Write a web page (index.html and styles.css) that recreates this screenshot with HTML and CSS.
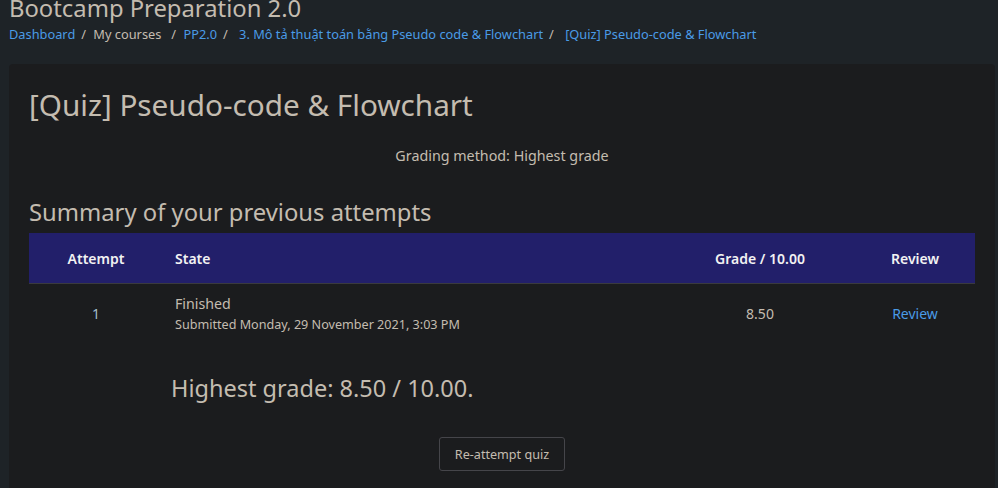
FILE: index.html
```html
<!DOCTYPE html>
<html>
<head>
<meta charset="utf-8">
<link rel="stylesheet" href="styles.css">
</head>
<body>
<header class="page-header">
  <h1 class="course-title">Bootcamp Preparation 2.0</h1>
  <nav class="breadcrumb">
    <a href="#">Dashboard</a><span class="sep">/</span>
    <span class="crumb-text">My courses</span><span class="sep">/</span>
    <a href="#">PP2.0</a><span class="sep">/</span>
    <a href="#" class="crumb-wide">3. Mô tả thuật toán bằng Pseudo code &amp; Flowchart</a><span class="sep">/</span>
    <a href="#" class="crumb-wide">[Quiz] Pseudo-code &amp; Flowchart</a>
  </nav>
</header>
<main class="card">
  <h2 class="quiz-title">[Quiz] Pseudo-code &amp; Flowchart</h2>
  <p class="grading">Grading method: Highest grade</p>
  <h3 class="summary">Summary of your previous attempts</h3>
  <table class="attempts">
    <thead>
      <tr>
        <th class="c-attempt">Attempt</th>
        <th class="c-state">State</th>
        <th class="c-grade">Grade / 10.00</th>
        <th class="c-review">Review</th>
      </tr>
    </thead>
    <tbody>
      <tr>
        <td class="c-attempt num">1</td>
        <td class="c-state">Finished<span class="submitted">Submitted Monday, 29 November 2021, 3:03 PM</span></td>
        <td class="c-grade">8.50</td>
        <td class="c-review"><a href="#">Review</a></td>
      </tr>
    </tbody>
  </table>
  <p class="highest">Highest grade: 8.50 / 10.00.</p>
  <div class="actions"><button class="btn">Re-attempt quiz</button></div>
</main>
</body>
</html>
```
FILE: styles.css
```css
html, body {
  margin: 0;
  padding: 0;
  background: #1e2327;
  font-family: "Noto Sans", "Open Sans", sans-serif;
  color: #c4bcb0;
}
body {
  padding: 0 3px 0 9px;
  height: 488px;
  overflow: hidden;
}
a { color: #4a9be6; text-decoration: none; }
.page-header {
  height: 64px;
  display: flow-root;
}
.course-title {
  margin: -7px 0 0 0;
  font-size: 23.8px;
  font-weight: 400;
  line-height: 31px;
  color: #c4bcb0;
}
.breadcrumb {
  margin-top: 0;
  font-size: 12.8px;
  line-height: 20px;
  color: #c4bcb0;
}
.breadcrumb .sep { margin: 0 4px 0 6px; color: #c4bcb0; }
.breadcrumb .crumb-text + .sep { margin-left: 10px; }
.breadcrumb .crumb-wide { margin-left: 4px; }
.card {
  background: #1b1c1e;
  border-radius: 4px 4px 0 0;
  padding: 21px 20px 0 20px;
  height: 424px;
}
.quiz-title {
  margin: 0;
  font-size: 29.7px;
  font-weight: 400;
  line-height: 40px;
}
.grading {
  text-align: center;
  font-size: 14.3px;
  margin: 21px 0 0 0;
  line-height: 20px;
}
.summary {
  margin: 30px 0 0 0;
  font-size: 23.8px;
  font-weight: 400;
  line-height: 32px;
}
.attempts {
  width: 100%;
  border-collapse: collapse;
  margin-top: 5px;
  font-size: 14px;
}
.attempts th {
  background: #221f6a;
  color: #f2f2f2;
  font-weight: 600;
  height: 50px;
  padding: 0 12px;
  border-bottom: 1px solid #3a3a3e;
}
.attempts td {
  height: 59px;
  padding: 0 12px;
  color: #c4bcb0;
}
.c-attempt { width: 110px; text-align: center; }
.c-state { text-align: left; }
.c-grade { width: 166px; text-align: center; }
.c-review { width: 96px; text-align: center; }
.attempts td.num { color: #a3bccb; }
.attempts td.c-state { font-size: 14.2px; line-height: 21px; }
.submitted { display: block; font-size: 12.6px; line-height: 21px; }
.highest {
  margin: 29px 0 0 142px;
  font-size: 23.5px;
  line-height: 32px;
}
.actions { text-align: center; margin-top: 33px; }
.btn {
  font-family: inherit;
  font-size: 12.6px;
  color: #c4bcb0;
  background: transparent;
  border: 1px solid #45454a;
  border-radius: 3px;
  padding: 0 15px;
  height: 34px;
}
```
